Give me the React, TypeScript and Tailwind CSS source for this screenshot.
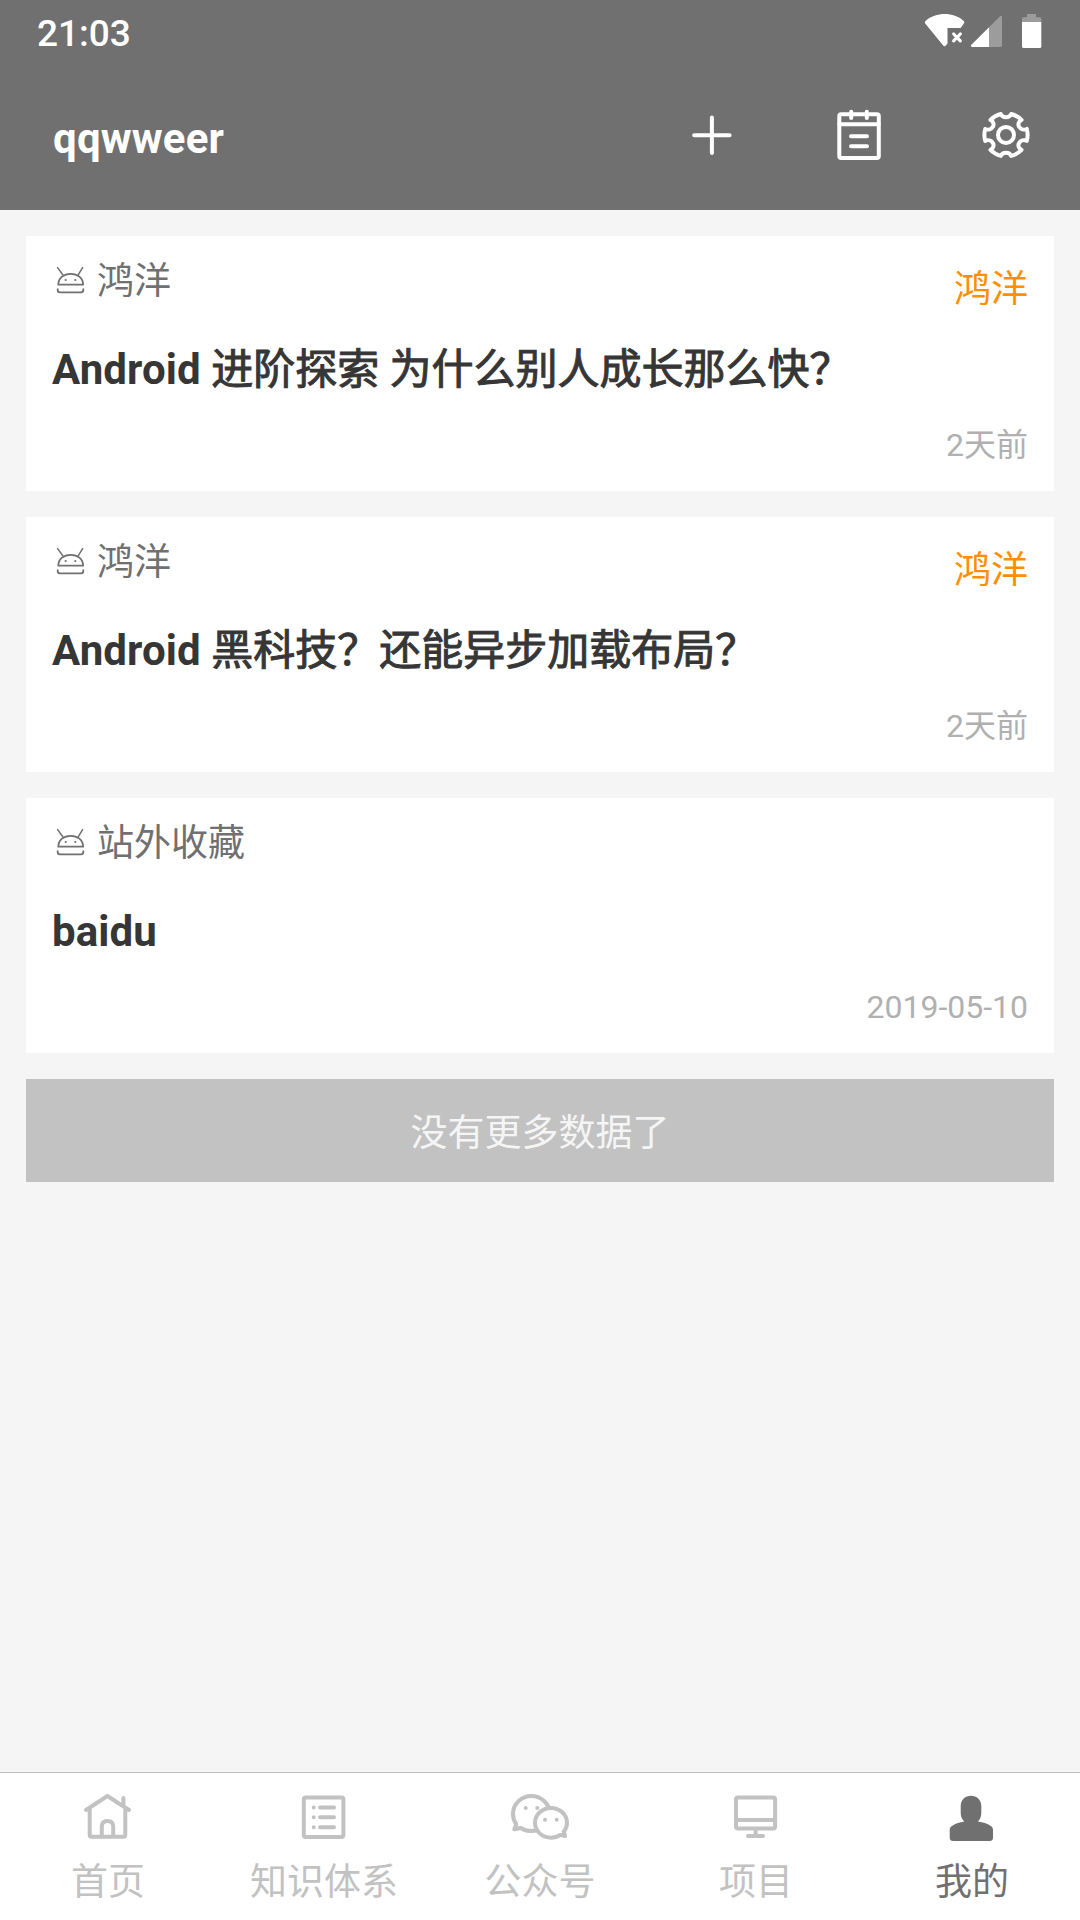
import React from "react";

const polar = (r: number, deg: number) => {
  const a = ((deg - 90) * Math.PI) / 180;
  return `${(30 + r * Math.cos(a)).toFixed(2)} ${(29.9 + r * Math.sin(a)).toFixed(2)}`;
};

const gearPath =
  [0, 60, 120, 180, 240, 300]
    .map((d, i) => `${i === 0 ? "M" : "A21.6 21.6 0 0 1 "}${polar(21.6, d - 14)}A5.6 5 0 0 0 ${polar(21.6, d + 14)}`)
    .join("") + "A21.6 21.6 0 0 1 " + polar(21.6, -14) + "Z";

type IconProps = { children: React.ReactNode };

function Icon({ children }: IconProps) {
  return (
    <svg
      className="size-[60px] shrink-0"
      viewBox="0 0 60 60"
      fill="none"
      stroke="currentColor"
      strokeWidth={4}
      strokeLinecap="round"
      strokeLinejoin="round"
    >
      {children}
    </svg>
  );
}

function StatusIcons() {
  return (
    <svg className="h-[64px] w-[180px]" viewBox="0 0 180 64" fill="#fff">
      <path d="M25.5 20.9C36 11.8 53.5 11.8 63.7 20.9Q64.9 22 64 23.3L60.7 27.9H47.5V43.6L45.6 45.8Q44.5 46.9 43.4 45.8L25.2 23.5Q24.2 22 25.5 20.9Z" />
      <path d="M53.7 34L60.3 40.8M60.3 34L53.7 40.8" stroke="#fff" strokeWidth={3.2} strokeLinecap="round" />
      <path d="M89 27.3L99.8 16.4Q102 15 102 17V45.6Q102 47 100.6 47H89Z" fill="#9c9c9c" />
      <path d="M89 27.3V47H72Q70 46.3 71.4 44.8Z" />
      <path d="M122 22V18.8Q122 17.3 123.5 17.3H127V14H136V17.3H139.8Q141.3 17.3 141.3 18.8V22Z" fill="#9c9c9c" />
      <path d="M122 22H141.3V46.5Q141.3 48 139.8 48H123.5Q122 48 122 46.5Z" />
    </svg>
  );
}

function AndroidIcon() {
  return (
    <svg className="size-[30px] shrink-0" viewBox="0 0 30 30" fill="none" stroke="#707070" strokeWidth={1.8} strokeLinecap="round">
      <path d="M2.3 18.7C2.3 11.6 8 7.9 14.7 7.9S27.1 11.6 27.1 18.7Z" strokeLinejoin="round" />
      <path d="M1.6 1.6L6.8 8.8M26.6 1.6L22.2 8.8" strokeWidth={1.5} />
      <path d="M1.7 23.2V24Q1.7 26.3 4 26.3H25Q27.3 26.3 27.3 24V23.2" />
      <circle cx="9.7" cy="14" r="1.1" fill="#707070" stroke="none" />
      <circle cx="19.3" cy="14" r="1.1" fill="#707070" stroke="none" />
    </svg>
  );
}

type Article = { source: string; tag?: string; latin: string; han?: string; date: string };

const articles: Article[] = [
  { source: "鸿洋", tag: "鸿洋", latin: "Android ", han: "进阶探索 为什么别人成长那么快？", date: "2天前" },
  { source: "鸿洋", tag: "鸿洋", latin: "Android ", han: "黑科技？还能异步加载布局？", date: "2天前" },
  { source: "站外收藏", latin: "baidu", date: "2019-05-10" },
];

function ArticleCard({ source, tag, latin, han, date }: Article) {
  return (
    <article className="flex h-[255px] flex-col bg-white px-[26px] pt-[24px]">
      <div className="flex h-[60px] items-start justify-between">
        <div className="flex h-[44px] items-center gap-[11px] pl-1 text-[#707070]">
          <span className="-mt-[2px] flex">
            <AndroidIcon />
          </span>
          <span className="text-[37px] leading-[44px]">{source}</span>
        </div>
        <span className="mt-2 text-[37px] leading-[44px] text-[#ff8f00]">{tag}</span>
      </div>
      <h2 className="mt-[25px] text-[42px] leading-[50px] font-bold tracking-[0.1px] whitespace-pre text-[#363636]">
        {latin}
        <span className="font-normal tracking-normal [-webkit-text-stroke:1px_#363636]">{han}</span>
      </h2>
      <time className="mt-[30px] self-end text-[32px] leading-[40px] text-[#b0b0b0]">{date}</time>
    </article>
  );
}

const tabs = [
  {
    label: "首页",
    icon: (
      <>
        <path d="M8 23L29.4 9L51 23M45.4 11V18.5M11.7 22V47.7Q11.7 49.7 13.7 49.7H45.3Q47.3 49.7 47.3 47.7V22" />
        <path d="M23.8 49V39.5Q23.8 34 29.5 34T35.2 39.5V49" />
      </>
    ),
  },
  {
    label: "知识体系",
    icon: (
      <>
        <rect x="9.8" y="10.6" width="39.6" height="39.4" rx="2" />
        <path d="M26 20.4H40M26 30.3H40M26 40.2H40M19.7 20.4h.01M19.7 30.3h.01M19.7 40.2h.01" />
      </>
    ),
  },
  {
    label: "公众号",
    icon: (
      <>
        <path d="M4.3 42.3L6.3 37.3C3.9 34 3 30.6 3 27C3 17 11.2 9 21.4 9C31.5 9 39.8 17 39.8 26.5C39.8 36 31.5 44 21.4 44C17.5 44 14 43.2 10.8 41Z" />
        <path
          d="M55 49L53.8 44.5C56 42 57 39.2 57 35.8C57 27.5 49.8 20.9 41 20.9S25 27.5 25 35.8S32.2 50.7 41 50.7C44.6 50.7 47.8 49.7 50.3 47.9Z"
          fill="#fff"
        />
        <path d="M15.7 21h.01M27.3 21h.01M35 32.7h.01M46.7 32.7h.01" />
      </>
    ),
  },
  {
    label: "项目",
    icon: (
      <>
        <rect x="10" y="10.6" width="39.1" height="31" rx="2" />
        <path d="M10 33H49M29.6 42V48M22 49H37" />
      </>
    ),
  },
  {
    label: "我的",
    active: true,
    icon: (
      <path
        d="M18.7 19C18.7 12.7 23.4 8.7 29 8.7S39.3 12.7 39.3 19V25.5C39.3 29 38.5 32 36 34.6C41 35.4 45 36.5 48.8 38.9C50.4 39.9 51 41.2 51 43V50.5Q51 54 47.5 54H11.2Q7.7 54 7.7 50.5V43C7.7 41.2 8.4 39.9 10 38.9C13.7 36.5 17.5 35.4 22.3 34.6C19.6 32 18.7 29 18.7 25.5Z"
        fill="currentColor"
        stroke="none"
      />
    ),
  },
];

export default function App() {
  return (
    <div className="flex h-[1920px] w-[1080px] flex-col overflow-hidden bg-[#f5f5f5] font-['Roboto','Noto_Sans_CJK_SC',sans-serif]">
      <header className="h-[210px] shrink-0 bg-[#707070] text-white">
        <div className="flex h-[64px] items-center justify-between">
          <span className="pt-[4px] pl-[37px] text-[37px] leading-[44px] font-medium">21:03</span>
          <StatusIcons />
        </div>
        <div className="flex h-[146px] items-center justify-between">
          <h1 className="pt-[3px] pl-[53px] text-[42px] leading-[50px] font-bold tracking-[0.2px]">qqwweer</h1>
          <div className="flex pr-[0.5px] pb-1">
            <button className="flex w-[147px] justify-center">
              <Icon>
                <path d="M12.2 30.3H47.6M29.9 12.6V48" />
              </Icon>
            </button>
            <button className="flex w-[147px] justify-center">
              <Icon>
                <rect x="10.3" y="9.3" width="39.5" height="43.7" rx="2" />
                <path d="M10.3 19.3H49.8M22.2 6.8V13M37.8 6.8V13M22 31.3H38M22 41.2H38" />
              </Icon>
            </button>
            <button className="flex w-[147px] justify-center">
              <Icon>
                <path d={gearPath} />
                <circle cx="30" cy="29.9" r="8" />
              </Icon>
            </button>
          </div>
        </div>
      </header>

      <main className="flex flex-1 flex-col gap-[26px] p-[26px]">
        {articles.map((a) => (
          <ArticleCard key={a.latin + (a.han ?? "")} {...a} />
        ))}
        <div className="flex h-[103px] items-center justify-center bg-[#c2c2c2] pt-[6px] text-[37px] leading-[44px] text-[#f5f5f5]">
          没有更多数据了
        </div>
      </main>

      <nav className="grid h-[148px] shrink-0 grid-cols-5 border-t border-[#bfbfbf] bg-white">
        {tabs.map((t) => (
          <button
            key={t.label}
            className={`flex flex-col items-center pt-[14px] ${t.active ? "text-[#707070]" : "text-[#c2c2c2]"}`}
          >
            <Icon>{t.icon}</Icon>
            <span className="mt-[14px] text-[37px] leading-[44px]">{t.label}</span>
          </button>
        ))}
      </nav>
    </div>
  );
}
